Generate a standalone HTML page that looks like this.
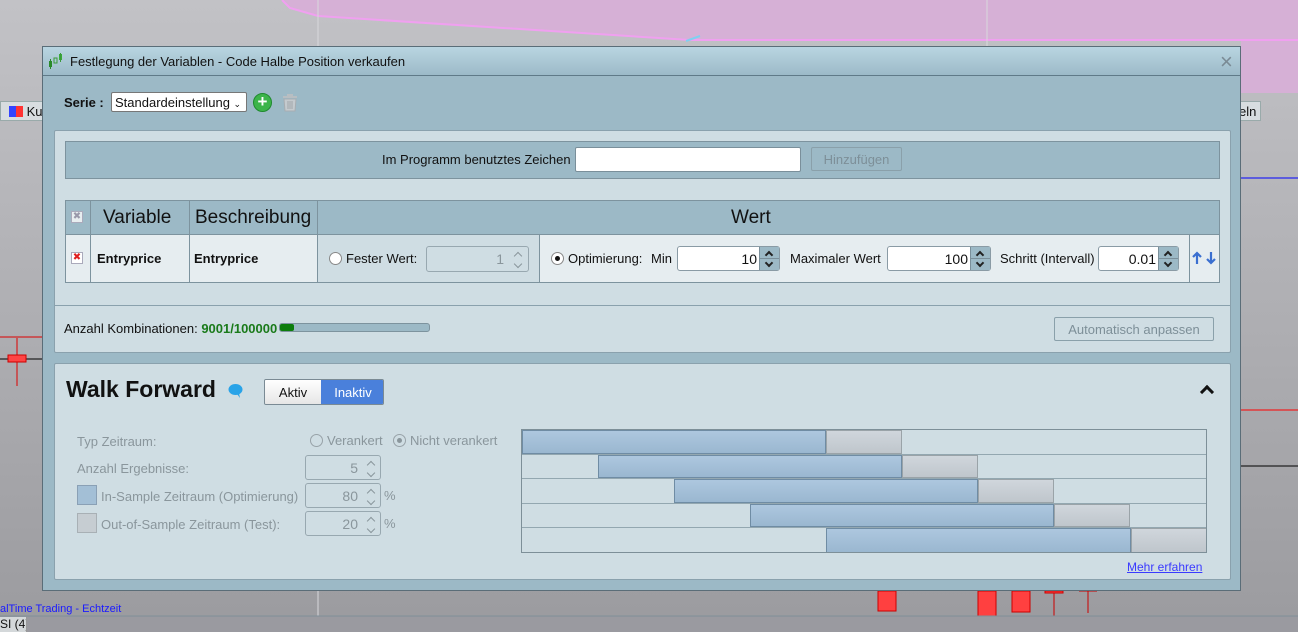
<!DOCTYPE html>
<html><head><meta charset="utf-8"><style>
*{box-sizing:border-box;margin:0;padding:0}
body{width:1298px;height:632px;overflow:hidden;position:relative;font-family:"Liberation Sans",sans-serif;font-size:13px;color:#111;background:linear-gradient(#c2c2c6,#9b9b9f)}
.a{position:absolute;white-space:nowrap}
.spin{position:absolute;border:1px solid #8a9ba5;border-radius:3px;background:#fff;height:25px}
.spin .v{position:absolute;right:22px;top:4px;font-size:14px}
.spin .b{position:absolute;right:0;top:0;width:20px;height:23px;background:#9cb9c6;border-left:1px solid #7a8f9a}
.spin .b:after{content:"";position:absolute;left:0;right:0;top:11px;border-top:1px solid #7a8f9a}
.chev{position:absolute;left:6px;width:6px;height:6px;border-left:2px solid #222;border-top:2px solid #222}
.g{color:#8a969c}
.dspin{position:absolute;border:1px solid #98a8b0;border-radius:3px;height:25px;width:76px}
.dspin span{position:absolute;right:22px;top:4px;font-size:14px;color:#8a969c}
.dspin i{position:absolute;right:6px;width:6px;height:6px;border-left:1px solid #8a969c;border-top:1px solid #8a969c}
.row{position:absolute;left:0;width:685px;height:24.6px;border-bottom:1px solid #93a7b0}
.blu{position:absolute;top:0;height:100%;background:linear-gradient(#adc7df,#9ab7d0);border:1px solid #6f8ca4}
.gry{position:absolute;top:0;height:100%;background:linear-gradient(#d0d6dc,#bfc6cc);border:1px solid #9aa3a8}
</style></head><body>
<svg class="a" style="left:0;top:0" width="1298" height="632">
<polygon points="282,0 1298,0 1298,93 1241,93 1241,40 720,40 690,40 318,16 290,8" fill="#d6b0d6"/>
<polyline points="282,0 290,8 318,16 690,40 1298,40" fill="none" stroke="#f0a0f0" stroke-width="2"/>
<line x1="686" y1="41" x2="700" y2="36" stroke="#7fd0f0" stroke-width="2"/>
<line x1="318" y1="0" x2="318" y2="632" stroke="#d8d8dc"/>
<line x1="987" y1="0" x2="987" y2="632" stroke="#d8d8dc"/>
<line x1="1241" y1="178" x2="1298" y2="178" stroke="#0000ff"/>
<line x1="1241" y1="410" x2="1298" y2="410" stroke="#ff0000"/>
<line x1="1241" y1="466" x2="1298" y2="466" stroke="#000"/>
<line x1="0" y1="337" x2="42" y2="337" stroke="#d00"/>
<line x1="0" y1="359" x2="42" y2="359" stroke="#000"/>
<line x1="17" y1="338" x2="17" y2="386" stroke="#d00"/>
<rect x="8" y="355" width="18" height="7" fill="#ff4444" stroke="#c00"/>
<rect x="878" y="591" width="18" height="20" fill="#ff4040" stroke="#c00"/>
<rect x="978" y="591" width="18" height="26" fill="#ff4040" stroke="#c00"/>
<rect x="1012" y="591" width="18" height="21" fill="#ff4040" stroke="#c00"/>
<rect x="1045" y="591" width="18" height="2" fill="#ff4040" stroke="#c00"/>
<line x1="1054" y1="593" x2="1054" y2="616" stroke="#c00"/>
<line x1="1079" y1="591" x2="1097" y2="591" stroke="#c00"/>
<line x1="1088" y1="591" x2="1088" y2="613" stroke="#c00"/>
<rect x="0" y="616" width="1298" height="16" fill="#9a9aa0"/>
<line x1="0" y1="616" x2="1298" y2="616" stroke="#7f8f99"/>
</svg>
<div class="a" style="left:0;top:101px;width:44px;height:20px;background:#d8dde0;border:1px solid #9aa;font-size:13px;padding:2px 0 0 8px"><span style="display:inline-block;width:7px;height:11px;background:#3344ff;vertical-align:-1px"></span><span style="display:inline-block;width:7px;height:11px;background:#ff3333;vertical-align:-1px"></span> Ku</div>
<div class="a" style="left:1236px;top:101px;width:25px;height:20px;background:#d8dde0;border:1px solid #9aa;font-size:13px;padding:2px 0 0 2px">eln</div>
<div class="a" style="left:0;top:603px;font-size:11px;color:#1a1aff">alTime Trading - Echtzeit</div>
<div class="a" style="left:0;top:617px;width:27px;height:15px;background:#d4d8da;border-right:1px solid #999;font-size:12px;overflow:hidden">SI (4)</div>

<div class="a" style="left:42px;top:46px;width:1199px;height:545px;background:#9cb9c6;border:1px solid #5a6d78">
 <div class="a" style="left:0;top:0;width:1197px;height:29px;background:linear-gradient(#b9d5e1,#9cbac8);border-bottom:1px solid #5f7a88"></div>
 <svg class="a" style="left:5px;top:6px" width="16" height="16"><rect x="1" y="8" width="3" height="6" fill="#2a8a2a"/><line x1="2.5" y1="6" x2="2.5" y2="16" stroke="#2a8a2a"/><rect x="6" y="5" width="3" height="5" fill="none" stroke="#3a9a3a"/><rect x="11" y="1" width="3" height="6" fill="#3aaa3a"/><line x1="12.5" y1="0" x2="12.5" y2="9" stroke="#3a9a3a"/></svg>
 <div class="a" style="left:27px;top:7px;font-size:13px">Festlegung der Variablen - Code Halbe Position verkaufen</div>
 <div class="a" style="left:1177px;top:2px;font-size:22px;color:#7a8a94">×</div>
 <div class="a" style="left:21px;top:48px;font-weight:bold">Serie :</div>
 <div class="a" style="left:68px;top:45px;width:136px;height:20px;background:#fff;border:1px solid #777;border-radius:2px;padding:2px 0 0 3px;font-size:13px">Standardeinstellung <span style="font-size:9px">⌄</span></div>
 <div class="a" style="left:210px;top:46px;width:19px;height:19px;border-radius:50%;background:#3cb44a;border:1px solid #1f8a2f;color:#fff;font-weight:bold;font-size:17px;line-height:16px;text-align:center">+</div>
 <svg class="a" style="left:238px;top:46px" width="18" height="19"><rect x="2" y="3" width="14" height="2" fill="#b8bec2"/><rect x="6" y="1" width="6" height="2" fill="#b8bec2"/><path d="M3 6h12l-1 12H4z" fill="#c4cace" stroke="#a7adb1"/><path d="M7 8v8M9 8v8M11 8v8" stroke="#a0a6aa"/></svg>

 <div class="a" style="left:11px;top:83px;width:1177px;height:223px;background:#cfdde3;border:1px solid #8aa1ad;border-radius:2px"></div>
 <div class="a" style="left:22px;top:94px;width:1155px;height:38px;background:#9cb9c6;border:1px solid #7d939e"></div>
 <div class="a" style="left:339px;top:105px">Im Programm benutztes Zeichen</div>
 <div class="a" style="left:532px;top:100px;width:226px;height:25px;background:#fff;border:1px solid #7a8f9a;border-radius:2px"></div>
 <div class="a" style="left:768px;top:100px;width:91px;height:24px;border:1px solid #8aa0aa;border-radius:2px;color:#7d8f98;text-align:center;padding-top:4px">Hinzufügen</div>
 <div class="a" style="left:22px;top:153px;width:1155px;height:83px;border:1px solid #7d939e;background:#e6edf0"></div>
 <div class="a" style="left:23px;top:154px;width:1153px;height:34px;background:#9cb9c6;border-bottom:1px solid #7d939e"></div>
 <div class="a" style="left:23px;top:188px;width:252px;height:47px;background:#e6edf0"></div>
 <div class="a" style="left:275px;top:188px;width:221px;height:47px;background:#cfdde3"></div>
 <div class="a" style="left:47px;top:154px;width:1px;height:81px;background:#7d939e"></div>
 <div class="a" style="left:146px;top:154px;width:1px;height:81px;background:#7d939e"></div>
 <div class="a" style="left:274px;top:154px;width:1px;height:81px;background:#7d939e"></div>
 <div class="a" style="left:496px;top:188px;width:1px;height:47px;background:#7d939e"></div>
 <div class="a" style="left:1146px;top:188px;width:1px;height:47px;background:#7d939e"></div>
 <div class="a" style="left:28px;top:164px;width:12px;height:12px;background:#e8eef0;border:1px solid #aab;color:#99a;font-size:10px;line-height:10px;text-align:center">✖</div>
 <div class="a" style="left:28px;top:205px;width:12px;height:12px;background:#fff;border:1px solid #aab;color:#e02020;font-size:10px;line-height:10px;text-align:center">✖</div>
 <div class="a" style="left:60px;top:160px;font-size:19px">Variable</div>
 <div class="a" style="left:152px;top:160px;font-size:19px">Beschreibung</div>
 <div class="a" style="left:688px;top:160px;font-size:19px">Wert</div>
 <div class="a" style="left:54px;top:204px;font-weight:bold">Entryprice</div>
 <div class="a" style="left:151px;top:204px;font-weight:bold">Entryprice</div>
 <div class="a" style="left:286px;top:205px;width:13px;height:13px;border-radius:50%;background:#fff;border:1px solid #888"></div>
 <div class="a" style="left:303px;top:204px">Fester Wert:</div>
 <div class="a" style="left:383px;top:199px;width:103px;height:26px;border:1px solid #98a8b0;border-radius:3px"><span style="position:absolute;right:24px;top:4px;color:#8a969c;font-size:14px">1</span><i class="a" style="right:7px;top:6px;width:6px;height:6px;border-left:1px solid #8a969c;border-top:1px solid #8a969c;transform:rotate(45deg)"></i><i class="a" style="right:7px;top:14px;width:6px;height:6px;border-left:1px solid #8a969c;border-top:1px solid #8a969c;transform:rotate(-135deg)"></i></div>
 <div class="a" style="left:508px;top:205px;width:13px;height:13px;border-radius:50%;background:#fff;border:1px solid #888"><div style="width:5px;height:5px;border-radius:50%;background:#111;margin:3px"></div></div>
 <div class="a" style="left:525px;top:204px">Optimierung:</div>
 <div class="a" style="left:608px;top:204px">Min</div>
 <div class="spin" style="left:634px;top:199px;width:103px"><span class="v">10</span><div class="b"><i class="chev" style="top:5px;transform:rotate(45deg)"></i><i class="chev" style="top:13px;transform:rotate(-135deg)"></i></div></div>
 <div class="a" style="left:747px;top:204px">Maximaler Wert</div>
 <div class="spin" style="left:844px;top:199px;width:104px"><span class="v">100</span><div class="b"><i class="chev" style="top:5px;transform:rotate(45deg)"></i><i class="chev" style="top:13px;transform:rotate(-135deg)"></i></div></div>
 <div class="a" style="left:957px;top:204px">Schritt (Intervall)</div>
 <div class="spin" style="left:1055px;top:199px;width:81px"><span class="v">0.01</span><div class="b"><i class="chev" style="top:5px;transform:rotate(45deg)"></i><i class="chev" style="top:13px;transform:rotate(-135deg)"></i></div></div>
 <svg class="a" style="left:1149px;top:204px" width="26" height="14"><path d="M5 13V2M1 6l4-4 4 4" stroke="#3a6fd0" stroke-width="2.2" fill="none"/><path d="M19 1v11M15 8l4 4 4-4" stroke="#3a6fd0" stroke-width="2.2" fill="none"/></svg>
 <div class="a" style="left:12px;top:258px;width:1175px;height:1px;background:#8aa1ad"></div>
 <div class="a" style="left:21px;top:274px">Anzahl Kombinationen: <span style="color:#1a7a1a;font-weight:bold">9001/100000</span></div>
 <div class="a" style="left:236px;top:276px;width:151px;height:9px;border:1px solid #7d939e;border-radius:3px;background:#9cb9c6"><div style="width:14px;height:7px;background:#0c7d0c;border-radius:2px"></div></div>
 <div class="a" style="left:1011px;top:270px;width:160px;height:24px;border:1px solid #8aa0aa;border-radius:2px;color:#7d8f98;text-align:center;padding-top:4px">Automatisch anpassen</div>

 <div class="a" style="left:11px;top:316px;width:1177px;height:217px;background:#cfdde3;border:1px solid #8aa1ad;border-radius:2px"></div>
 <div class="a" style="left:23px;top:329px;font-size:23px;font-weight:bold">Walk Forward</div>
 <svg class="a" style="left:185px;top:336px" width="16" height="16"><ellipse cx="7.5" cy="6.5" rx="7" ry="5.5" fill="#29a3e8"/><path d="M9 11l3 4-1-5z" fill="#29a3e8"/></svg>
 <div class="a" style="left:221px;top:332px;width:120px;height:26px;border:1px solid #7a8a94;border-radius:2px;overflow:hidden;font-size:13px">
  <div style="position:absolute;left:0;top:0;width:56px;height:100%;background:linear-gradient(#fff,#e6e6e6);text-align:center;padding-top:5px">Aktiv</div>
  <div style="position:absolute;left:56px;top:0;width:64px;height:100%;background:#4a80db;color:#fff;text-align:center;padding-top:5px">Inaktiv</div>
 </div>
 <div class="a" style="left:1159px;top:340px;width:10px;height:10px;border-left:3px solid #111;border-top:3px solid #111;transform:rotate(45deg)"></div>
 <div class="a g" style="left:34px;top:387px">Typ Zeitraum:</div>
 <div class="a" style="left:267px;top:387px;width:13px;height:13px;border-radius:50%;border:1px solid #98a2a8"></div>
 <div class="a g" style="left:284px;top:386px">Verankert</div>
 <div class="a" style="left:350px;top:387px;width:13px;height:13px;border-radius:50%;border:1px solid #98a2a8"><div style="width:5px;height:5px;border-radius:50%;background:#8a969c;margin:3px"></div></div>
 <div class="a g" style="left:367px;top:386px">Nicht verankert</div>
 <div class="a g" style="left:34px;top:414px">Anzahl Ergebnisse:</div>
 <div class="dspin" style="left:262px;top:408px"><span>5</span><i style="top:6px;transform:rotate(45deg)"></i><i style="top:14px;transform:rotate(-135deg)"></i></div>
 <div class="a" style="left:34px;top:438px;width:20px;height:20px;background:#a3bfd6;border:1px solid #8aa0b5"></div>
 <div class="a g" style="left:58px;top:442px">In-Sample Zeitraum (Optimierung)</div>
 <div class="dspin" style="left:262px;top:436px"><span>80</span><i style="top:6px;transform:rotate(45deg)"></i><i style="top:14px;transform:rotate(-135deg)"></i></div>
 <div class="a g" style="left:341px;top:441px">%</div>
 <div class="a" style="left:34px;top:466px;width:20px;height:20px;background:#c6cdd2;border:1px solid #a8b0b5"></div>
 <div class="a g" style="left:58px;top:470px">Out-of-Sample Zeitraum (Test):</div>
 <div class="dspin" style="left:262px;top:464px"><span>20</span><i style="top:6px;transform:rotate(45deg)"></i><i style="top:14px;transform:rotate(-135deg)"></i></div>
 <div class="a g" style="left:341px;top:469px">%</div>
 <div class="a" style="left:478px;top:382px;width:686px;height:124px;border:1px solid #7d8f98;background:#cfdde3;overflow:hidden">
  <div class="row" style="top:0"><div class="blu" style="left:0;width:304px"></div><div class="gry" style="left:304px;width:76px"></div></div>
  <div class="row" style="top:24.6px"><div class="blu" style="left:76px;width:304px"></div><div class="gry" style="left:380px;width:76px"></div></div>
  <div class="row" style="top:49.2px"><div class="blu" style="left:152px;width:304px"></div><div class="gry" style="left:456px;width:76px"></div></div>
  <div class="row" style="top:73.8px"><div class="blu" style="left:228px;width:304px"></div><div class="gry" style="left:532px;width:76px"></div></div>
  <div class="row" style="top:98.4px;border-bottom:none"><div class="blu" style="left:304px;width:305px"></div><div class="gry" style="left:609px;width:76px"></div></div>
 </div>
 <div class="a" style="left:1084px;top:513px;color:#3a3aff;text-decoration:underline;font-size:12px">Mehr erfahren</div>
</div>
</body></html>
